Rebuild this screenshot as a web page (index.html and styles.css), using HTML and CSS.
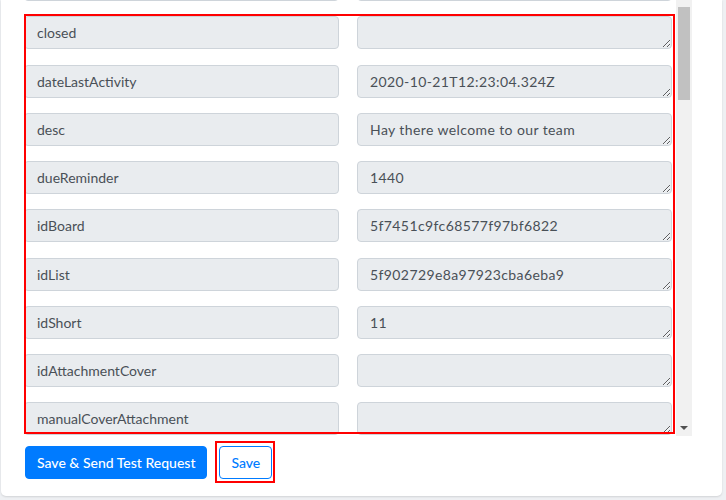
FILE: index.html
```html
<!DOCTYPE html>
<html lang="en">
<head>
<meta charset="utf-8">
<title>Field mapping</title>
<link rel="stylesheet" href="styles.css">
</head>
<body>
<div class="card">
  <div class="scroll-area">
    <div class="viewport">
      <div class="fields">
        <input class="field" type="text" value="" readonly>
        <textarea class="value" readonly></textarea>

        <input class="field" type="text" value="closed" readonly>
        <textarea class="value" readonly></textarea>

        <input class="field" type="text" value="dateLastActivity" readonly>
        <textarea class="value" readonly>2020-10-21T12:23:04.324Z</textarea>

        <input class="field" type="text" value="desc" readonly>
        <textarea class="value" readonly>Hay there welcome to our team</textarea>

        <input class="field" type="text" value="dueReminder" readonly>
        <textarea class="value" readonly>1440</textarea>

        <input class="field" type="text" value="idBoard" readonly>
        <textarea class="value" readonly>5f7451c9fc68577f97bf6822</textarea>

        <input class="field" type="text" value="idList" readonly>
        <textarea class="value" readonly>5f902729e8a97923cba6eba9</textarea>

        <input class="field" type="text" value="idShort" readonly>
        <textarea class="value" readonly>11</textarea>

        <input class="field" type="text" value="idAttachmentCover" readonly>
        <textarea class="value" readonly></textarea>

        <input class="field" type="text" value="manualCoverAttachment" readonly>
        <textarea class="value" readonly></textarea>

        <input class="field" type="text" value="name" readonly>
        <textarea class="value" readonly></textarea>
      </div>
    </div>
    <div class="scrollbar">
      <div class="track"><div class="thumb"></div></div>
      <div class="arrow-btn"><span class="arrow-down"></span></div>
    </div>
    <div class="highlight highlight-fields"></div>
  </div>
  <div class="actions">
    <button class="btn btn-primary" type="button">Save &amp; Send Test Request</button>
    <span class="save-wrap">
      <button class="btn btn-outline" type="button">Save</button>
      <span class="highlight highlight-save"></span>
    </span>
  </div>
</div>
</body>
</html>
```

FILE: styles.css
```css
html, body {
  margin: 0;
  padding: 0;
}

body {
  background: #eef0f3;
  font-family: Lato, "Open Sans", sans-serif;
  width: 726px;
  height: 500px;
  overflow: hidden;
}

.card {
  margin-left: 1px;
  width: 721px;
  height: 496px;
  background: #ffffff;
  border-radius: 0 0 5px 5px;
  box-shadow: 0 1px 2px rgba(0, 0, 0, 0.12);
  box-sizing: border-box;
  display: flex;
  flex-direction: column;
}

.scroll-area {
  position: relative;
  height: 436px;
  display: flex;
  padding-left: 23px;
}

.viewport {
  width: 652px;
  height: 436px;
  overflow: hidden;
}

.fields {
  margin-top: -32px;
  display: grid;
  grid-template-columns: 315px 315px;
  column-gap: 18px;
  row-gap: 15.25px;
}

.field,
.value {
  display: block;
  box-sizing: border-box;
  width: 315px;
  height: 33px;
  margin: 0;
  padding: 5px 12px;
  border: 1px solid #ced4da;
  border-radius: 4px;
  background: #e9ecef;
  color: #495057;
  font-family: Lato, "Open Sans", sans-serif;
  font-size: 14px;
  line-height: 21px;
  outline: none;
}

.value {
  resize: vertical;
  overflow: hidden;
  letter-spacing: 0.4px;
}

.scrollbar {
  width: 16px;
  height: 436px;
  background: #f1f1f1;
  display: flex;
  flex-direction: column;
}

.track {
  flex: 1;
  padding-top: 7px;
}

.thumb {
  margin: 0 2px 0 2px;
  height: 93px;
  background: #c1c1c1;
}

.arrow-btn {
  height: 17px;
  display: flex;
  align-items: center;
  justify-content: center;
}

.arrow-down {
  width: 0;
  height: 0;
  border-left: 4px solid transparent;
  border-right: 4px solid transparent;
  border-top: 4px solid #505050;
}

.highlight {
  position: absolute;
  border: 2px solid #ff0000;
  box-sizing: border-box;
  pointer-events: none;
}

.highlight-fields {
  left: 23px;
  top: 14px;
  width: 651px;
  height: 420px;
}

.actions {
  display: flex;
  gap: 12px;
  padding: 10px 0 0 24px;
}

.btn {
  height: 33px;
  box-sizing: border-box;
  border-radius: 4px;
  font-family: Lato, "Open Sans", sans-serif;
  font-size: 14px;
  font-weight: 500;
  line-height: 21px;
  padding: 5px 11px;
  cursor: pointer;
}

.btn-primary {
  background: #007bff;
  border: 1px solid #007bff;
  color: #ffffff;
}

.btn-outline {
  background: #ffffff;
  border: 1px solid #007bff;
  color: #007bff;
}

.save-wrap {
  position: relative;
  display: inline-block;
}

.highlight-save {
  left: -4px;
  top: -5px;
  right: -3px;
  bottom: -4px;
}
```
